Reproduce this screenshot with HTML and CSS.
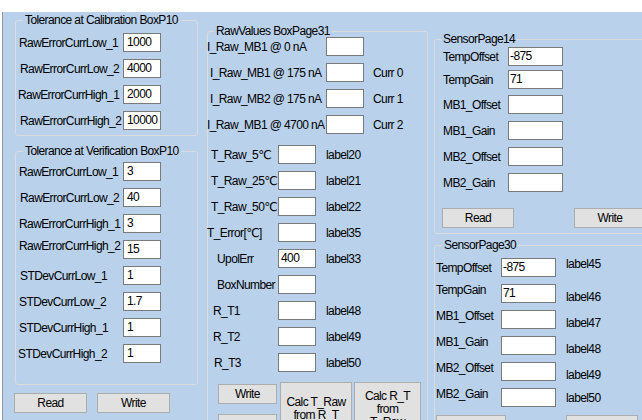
FILE: index.html
```html
<!DOCTYPE html>
<html>
<head>
<meta charset="utf-8">
<link rel="stylesheet" href="styles.css">
</head>
<body>
<div class="tabs"></div>
<div class="page">
  <div class="col col1">
    <div class="group g-cal">
      <div class="title">Tolerance at Calibration BoxP10</div>
      <div class="rows">
        <div class="row"><span class="lbl">RawErrorCurrLow_1</span><span class="tb">1000</span></div>
        <div class="row"><span class="lbl pl1">RawErrorCurrLow_2</span><span class="tb">4000</span></div>
        <div class="row"><span class="lbl ml1">RawErrorCurrHigh_1</span><span class="tb">2000</span></div>
        <div class="row"><span class="lbl pl1">RawErrorCurrHigh_2</span><span class="tb">10000</span></div>
      </div>
    </div>
    <div class="group g-ver">
      <div class="title">Tolerance at Verification BoxP10</div>
      <div class="rows">
        <div class="row"><span class="lbl">RawErrorCurrLow_1</span><span class="tb">3</span></div>
        <div class="row"><span class="lbl pl1">RawErrorCurrLow_2</span><span class="tb">40</span></div>
        <div class="row"><span class="lbl">RawErrorCurrHigh_1</span><span class="tb">3</span></div>
        <div class="row"><span class="lbl up">RawErrorCurrHigh_2</span><span class="tb">15</span></div>
        <div class="row"><span class="lbl pl1">STDevCurrLow_1</span><span class="tb">1</span></div>
        <div class="row"><span class="lbl">STDevCurrLow_2</span><span class="tb">1.7</span></div>
        <div class="row"><span class="lbl">STDevCurrHigh_1</span><span class="tb">1</span></div>
        <div class="row"><span class="lbl ml1">STDevCurrHigh_2</span><span class="tb">1</span></div>
      </div>
    </div>
    <div class="btnrow1">
      <button class="btn b73">Read</button>
      <button class="btn b73">Write</button>
    </div>
  </div>

  <div class="col col2">
    <div class="group g-raw">
      <div class="title">RawValues BoxPage31</div>
      <div class="rows">
        <div class="row rtop"><span class="lbl ml1">I_Raw_MB1 @ 0 nA</span><span class="tb"></span></div>
        <div class="row rtop"><span class="lbl pl2">I_Raw_MB1 @ 175 nA</span><span class="tb"></span><span class="side">Curr 0</span></div>
        <div class="row rtop"><span class="lbl pl2">I_Raw_MB2 @ 175 nA</span><span class="tb"></span><span class="side">Curr 1</span></div>
        <div class="row rtop"><span class="lbl ml1">I_Raw_MB1 @ 4700 nA</span><span class="tb"></span><span class="side">Curr 2</span></div>
        <div class="row rbot first"><span class="lbl pl3">T_Raw_5℃</span><span class="tb"></span><span class="side">label20</span></div>
        <div class="row rbot"><span class="lbl pl3">T_Raw_25℃</span><span class="tb"></span><span class="side">label21</span></div>
        <div class="row rbot"><span class="lbl pl3">T_Raw_50℃</span><span class="tb"></span><span class="side">label22</span></div>
        <div class="row rbot"><span class="lbl ml1">T_Error[℃]</span><span class="tb"></span><span class="side">label35</span></div>
        <div class="row rbot"><span class="lbl pl9">UpolErr</span><span class="tb num">400</span><span class="side">label33</span></div>
        <div class="row rbot"><span class="lbl pl9">BoxNumber</span><span class="tb"></span></div>
        <div class="row rbot"><span class="lbl pl5">R_T1</span><span class="tb"></span><span class="side">label48</span></div>
        <div class="row rbot"><span class="lbl pl5">R_T2</span><span class="tb"></span><span class="side">label49</span></div>
        <div class="row rbot"><span class="lbl pl6">R_T3</span><span class="tb"></span><span class="side">label50</span></div>
      </div>
      <div class="rawbtns">
        <div class="stack">
          <button class="btn bw">Write</button>
          <button class="btn bw"></button>
        </div>
        <button class="btn calc1">Calc T_Raw<br>from R_T</button>
        <button class="btn calc2">Calc R_T<br>from<br>T_Raw</button>
      </div>
    </div>
  </div>

  <div class="col col3">
    <div class="group g-s14">
      <div class="title">SensorPage14</div>
      <div class="srows">
        <div class="row"><span class="lbl">TempOffset</span><span class="tb">-875</span></div>
        <div class="row r2"><span class="lbl">TempGain</span><span class="tb">71</span></div>
        <div class="row r3"><span class="lbl">MB1_Offset</span><span class="tb"></span></div>
        <div class="row"><span class="lbl">MB1_Gain</span><span class="tb"></span></div>
        <div class="row"><span class="lbl">MB2_Offset</span><span class="tb"></span></div>
        <div class="row"><span class="lbl">MB2_Gain</span><span class="tb"></span></div>
      </div>
      <div class="sbtns">
        <button class="btn b72">Read</button>
        <button class="btn b72">Write</button>
      </div>
    </div>
    <div class="group g-s30">
      <div class="title">SensorPage30</div>
      <div class="rows">
        <div class="row"><span class="lbl">TempOffset</span><span class="tb">-875</span><span class="side up">label45</span></div>
        <div class="row"><span class="lbl up">TempGain</span><span class="tb">71</span><span class="side down">label46</span></div>
        <div class="row"><span class="lbl up">MB1_Offset</span><span class="tb"></span><span class="side down">label47</span></div>
        <div class="row"><span class="lbl up">MB1_Gain</span><span class="tb"></span><span class="side down">label48</span></div>
        <div class="row"><span class="lbl up">MB2_Offset</span><span class="tb"></span><span class="side down">label49</span></div>
        <div class="row"><span class="lbl up">MB2_Gain</span><span class="tb"></span><span class="side">label50</span></div>
      </div>
      <div class="sbtns30">
        <button class="btn b70"></button>
        <button class="btn b72"></button>
      </div>
    </div>
  </div>
</div>
</body>
</html>
```

FILE: styles.css
```css
* { box-sizing: border-box; }
html, body { margin: 0; padding: 0; }
body {
  width: 642px;
  height: 420px;
  overflow: hidden;
  background: #ffffff;
  font-family: "Liberation Sans", Arial, "DejaVu Sans", sans-serif;
  font-size: 12px;
  letter-spacing: -0.6px;
  color: #000;
}
.tabs { height: 12px; background: #ffffff; }
.page {
  margin-left: 2px;
  height: 408px;
  border-left: 1px solid #8f969e;
  background: #b9d1ea;
  display: flex;
  align-items: flex-start;
}
.col { flex: none; display: flex; flex-direction: column; align-items: flex-start; }
.col1 { margin-left: 12px; margin-top: 8px; width: 183px; }
.col2 { margin-left: 9px; margin-top: 19px; width: 221px; }
.col3 { margin-left: 6px; margin-top: 27px; width: 240px; }

.group {
  width: 100%;
  border: 1px solid #dcdcdc;
  border-radius: 3px;
}
.title {
  width: max-content;
  margin: -8px 0 0 7px;
  padding: 0 2px;
  line-height: 14px;
  background: #b9d1ea;
  white-space: nowrap;
}
.rows { display: flex; flex-direction: column; gap: 7px; }
.row { display: flex; align-items: center; height: 19px; }
.lbl { flex: none; white-space: nowrap; line-height: 14px; }
.side { flex: none; white-space: nowrap; line-height: 14px; }
.tb {
  flex: none;
  width: 38px;
  height: 19px;
  background: #fff;
  border: 1px solid #7a7a7a;
  padding-left: 3px;
  line-height: 17px;
  white-space: nowrap;
  overflow: hidden;
}
.tb.num { padding-left: 2px; }
.btn {
  font: inherit;
  letter-spacing: inherit;
  color: #000;
  background: #e1e1e1;
  border: 1px solid #adadad;
  padding: 0;
  margin: 0;
  line-height: 13px;
  flex: none;
}

.pl1 { padding-left: 1px; }
.pl2 { padding-left: 2px; }
.pl3 { padding-left: 3px; }
.pl5 { padding-left: 5px; }
.pl6 { padding-left: 6px; }
.pl9 { padding-left: 9px; }
.ml1 { margin-left: -1px; }
.up { margin-bottom: 7px; }
.down { margin-top: 6px; }

/* column 1 */
.g-cal .rows { margin-top: 6px; padding: 0 0 5px 3px; }
.g-ver { margin-top: 15px; }
.g-ver .rows { margin-top: 4px; padding: 0 0 21px 3px; }
.col1 .lbl { width: 104px; }
.col1 .lbl.pl1 { width: 104px; padding-left: 1px; }
.col1 .lbl.ml1 { width: 105px; }
.btnrow1 { display: flex; gap: 10px; margin: 8px 0 0 -1px; }
.b73 { width: 73px; height: 20px; }

/* column 2 */
.g-raw .title { margin-left: 6px; margin-bottom: -1px; }
.rtop .lbl { width: 118px; }
.rtop .lbl.ml1 { width: 119px; }
.rtop .side { margin-left: 9px; }
.rbot .lbl { width: 70px; }
.rbot .lbl.ml1 { width: 71px; }
.rbot .side { margin-left: 10px; }
.rbot.first { margin-top: 4px; }
.rawbtns { display: flex; align-items: flex-start; margin-top: 10px; padding: 0 0 20px 10px; }
.stack { display: flex; flex-direction: column; gap: 10px; margin-top: 2px; }
.bw { width: 59px; height: 20px; }
.calc1 { width: 72px; height: 54px; margin-left: 3px; }
.calc2 { width: 67px; height: 54px; margin-left: 2px; }

/* column 3 */
.g-s14 .title { margin-left: 6px; margin-bottom: 1px; }
.srows { display: flex; flex-direction: column; gap: 7px; }
.srows .r2 { margin-top: -3px; }
.srows .r3 { margin-top: -1px; }
.g-s14 .lbl { width: 73px; padding-left: 8px; }
.g-s14 .tb, .g-s30 .tb { width: 55px; padding-left: 1px; }
.sbtns { display: flex; gap: 60px; margin: 16px 0 0 7px; padding-bottom: 5px; }
.b72 { width: 72px; height: 20px; }
.b70 { width: 70px; height: 20px; }
.g-s30 { margin-top: 11px; }
.g-s30 .rows { margin-top: 6px; }
.g-s30 .lbl { width: 66px; padding-left: 1px; }
.g-s30 .side { margin-left: 10px; }
.sbtns30 { display: flex; gap: 60px; margin: 8px 0 0 1px; padding-bottom: 20px; }
```
